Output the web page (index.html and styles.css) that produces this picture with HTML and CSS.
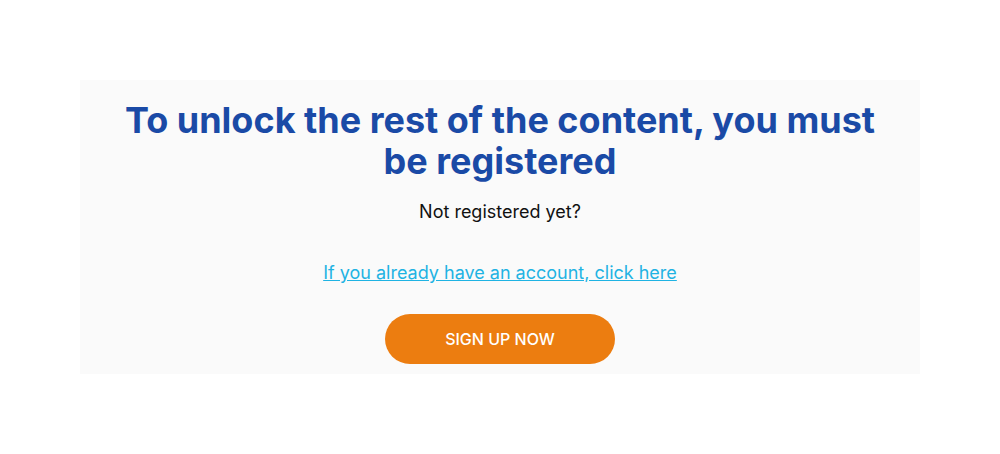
FILE: index.html
```html
<!DOCTYPE html>
<html lang="en">
<head>
    <meta charset="UTF-8">
    <meta name="viewport" content="width=device-width, initial-scale=1.0">
    <title>Registration required</title>
    <link rel="stylesheet" href="styles.css">
</head>
<body>
    <div class="lock-box">
        <h2 class="lock-title">To unlock the rest of the content, you must be registered</h2>
        <p class="lock-text">Not registered yet?</p>
        <a class="lock-link" href="#">If you already have an account, click here</a>
        <a class="lock-button" href="#">SIGN UP NOW</a>
    </div>
</body>
</html>
```

FILE: styles.css
```css
body {
    margin: 0;
    padding: 80px 80px;
    background: #fff;
    font-family: Inter, "Noto Sans", sans-serif;
}
.lock-box {
    background: #fafafa;
    padding: 20px 40px 10px;
    display: flex;
    flex-direction: column;
    align-items: center;
    text-align: center;
}
.lock-title {
    margin: 0;
    font-size: 36px;
    line-height: 41px;
    font-weight: 700;
    color: #1a4aa6;
    max-width: 770px;
}
.lock-text {
    margin: 18px 0 0;
    font-size: 18px;
    line-height: 24px;
    color: #111;
}
.lock-link {
    margin-top: 37px;
    font-size: 18px;
    line-height: 24px;
    color: #1fb3e3;
    text-decoration: underline;
}
.lock-button {
    margin-top: 29px;
    width: 230px;
    height: 50px;
    border-radius: 25px;
    background: #ec7d10;
    color: #fff;
    font-size: 16px;
    font-weight: 500;
    line-height: 50px;
    text-decoration: none;
}
```
